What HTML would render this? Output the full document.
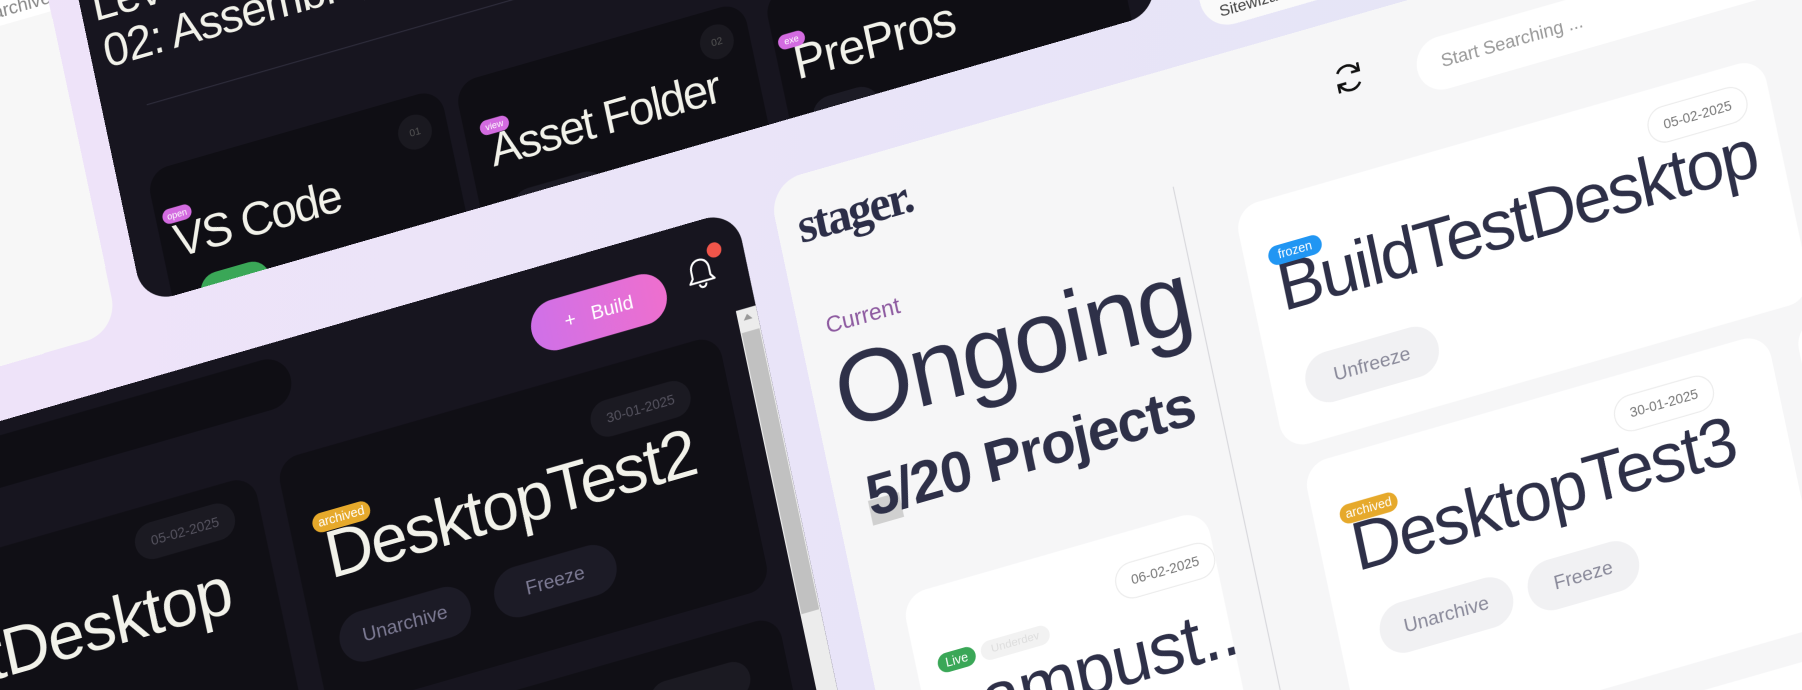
<!DOCTYPE html>
<html><head><meta charset="utf-8"><style>
*{margin:0;padding:0;box-sizing:border-box}
html,body{width:1802px;height:690px;overflow:hidden}
body{background:linear-gradient(100deg,#efe3f9 0%,#e9e4f8 45%,#e3e6f5 100%);font-family:"Liberation Sans",sans-serif}
#clip{position:relative;width:1802px;height:690px;overflow:hidden}
#s{position:absolute;left:0;top:0;width:1568px;height:600px;transform-origin:0 0;transform:scale(1.14923)}
.t{position:absolute;transform-origin:0 0;transform:matrix(0.961,-0.276,0.208,0.978,0,0);overflow:hidden}
.a{position:absolute;white-space:nowrap;line-height:1}
.dk{background:#17151f}
.dc{position:absolute;background:#0f0e14;border-radius:20px;overflow:hidden}
.lc{position:absolute;background:#fff;border-radius:22px;overflow:hidden}
.pill{position:absolute;border-radius:9px;color:#fff;font-size:10px;display:flex;align-items:center;justify-content:center}
.btn{position:absolute;border-radius:22px;display:flex;align-items:center;justify-content:center;font-size:17px}
.dd{position:absolute;border-radius:16px;font-size:12px;display:flex;align-items:center;justify-content:center}
</style></head><body><div id="clip"><div id="s">

<!-- left grey panel -->
<div class="t" style="left:-385px;top:-90px;width:400px;height:500px;background:#f7f7f7;border-radius:30px">
  <div style="position:absolute;left:0;top:0;width:400px;height:215px;background:#fff"></div>
  <div class="a" style="left:330px;top:196px;font-size:16px;color:#888">Unarchive</div>
</div>

<!-- Sitewiz panel -->
<div class="t" style="left:1008px;top:-168px;width:600px;height:200px;background:#fafafa;border-radius:26px">
  <div class="a" style="left:15px;top:179px;font-size:14px;color:#444">Sitewizard</div>
</div>

<!-- dark panel 1 -->
<div class="t dk" style="left:0;top:-322px;width:920px;height:600px;border-radius:28px">
  <div class="a" style="left:10px;top:318px;font-size:40px;color:#f2f2ea;letter-spacing:-1px">Level 02</div>
  <div class="a" style="left:12px;top:360px;font-size:40px;color:#f2f2ea;letter-spacing:-1px">02: Assemble, Test &amp; Deploy</div>
  <div style="position:absolute;left:39px;top:433px;width:870px;height:1px;background:#2e2c3b"></div>
  <div class="dc" style="left:26px;top:490px;width:266px;height:250px">
    <div class="dd" style="left:222px;top:16px;width:30px;height:30px;border-radius:50%;background:#1a1920;color:#555;font-size:9px">01</div>
    <div class="a" style="left:12px;top:46px;font-size:40px;color:#f2f2ea;letter-spacing:-1.5px">VS Code</div>
    <div class="pill" style="left:6px;top:36px;width:26px;height:13px;background:#d36be0;font-size:8px">open</div>
    <div class="btn" style="left:25px;top:100px;width:62px;height:32px;background:#3aa757;color:#fff;font-size:12px">Start</div>
  </div>
  <div class="dc" style="left:305px;top:490px;width:261px;height:250px">
    <div class="dd" style="left:217px;top:13px;width:30px;height:30px;border-radius:50%;background:#1a1920;color:#555;font-size:9px">02</div>
    <div class="a" style="left:19px;top:46px;font-size:40px;color:#f2f2ea;letter-spacing:-1.5px">Asset Folder</div>
    <div class="pill" style="left:14px;top:38px;width:26px;height:13px;background:#d36be0;font-size:8px">view</div>
    <div class="btn" style="left:27px;top:105px;width:84px;height:34px;background:#1c1b25;color:#666;font-size:12px">Explorer</div>
  </div>
  <div class="dc" style="left:585px;top:490px;width:310px;height:250px">
    <div class="a" style="left:14px;top:44px;font-size:42px;color:#f2f2ea;letter-spacing:-1px">PrePros</div>
    <div class="pill" style="left:4px;top:38px;width:24px;height:13px;background:#d36be0;font-size:8px">exe</div>
    <div class="btn" style="left:20px;top:100px;width:60px;height:34px;background:#1c1b25;color:#666;font-size:12px">Run</div>
  </div>
</div>

<!-- dark panel 2 -->
<div class="t dk" style="left:-225px;top:431px;width:900px;height:600px;border-radius:28px">
  <div style="position:absolute;left:150px;top:12px;width:340px;height:44px;border-radius:22px;background:#0f0e14"></div>
  <div class="btn" style="left:704px;top:31px;width:122px;height:44px;background:linear-gradient(90deg,#cf70e8,#ee6fce);color:#fff">+&nbsp;&nbsp;&nbsp;Build</div>
  <svg style="position:absolute;left:845px;top:30px" width="28" height="30" viewBox="0 0 28 30"><path d="M14 3c-5 0-8 4-8 9v6l-3 4h22l-3-4v-6c0-5-3-9-8-9z" fill="none" stroke="#fff" stroke-width="1.8" stroke-linejoin="round"/><path d="M11 24a3 3 0 0 0 6 0" fill="none" stroke="#fff" stroke-width="1.8"/></svg>
  <div style="position:absolute;left:868px;top:22px;width:13px;height:13px;border-radius:50%;background:#f0554a"></div>
  <div style="position:absolute;left:882px;top:85px;width:18px;height:515px;background:#ececec"></div>
  <div style="position:absolute;left:883px;top:105px;width:16px;height:250px;background:#c1c1c1"></div>
  <div style="position:absolute;left:887px;top:90px;width:0;height:0;border-left:4px solid transparent;border-right:4px solid transparent;border-bottom:5px solid #999"></div>
  <div class="dc" style="left:-20px;top:106px;width:460px;height:225px;background:#100f15">
    <div class="dd" style="left:347px;top:15px;width:90px;height:32px;background:#1b1a22;color:#55535f">05-02-2025</div>
    <div class="a" style="left:-190px;width:610px;text-align:right;top:62px;font-size:58px;color:#f2f2ea;letter-spacing:-1px">BuildTestDesktop</div>
  </div>
  <div class="dc" style="left:462px;top:100px;width:400px;height:225px;background:#100f15">
    <div class="dd" style="left:276px;top:28px;width:90px;height:32px;background:#1b1a22;color:#55535f">30-01-2025</div>
    <div class="a" style="left:26px;top:64px;font-size:58px;color:#f2f2ea;letter-spacing:-1.5px">DesktopTest2</div>
    <div class="pill" style="left:20px;top:54px;width:52px;height:17px;background:#e6a92b;font-size:11px">archived</div>
    <div class="btn" style="left:22px;top:146px;width:118px;height:44px;background:#1c1b26;color:#7c7a93">Unarchive</div>
    <div class="btn" style="left:162px;top:146px;width:110px;height:44px;background:#1c1b26;color:#7c7a93">Freeze</div>
  </div>
  <div class="dc" style="left:-20px;top:350px;width:460px;height:225px;background:#100f15"></div>
  <div class="dc" style="left:462px;top:350px;width:400px;height:225px;background:#100f15">
    <div class="dd" style="left:276px;top:28px;width:90px;height:32px;background:#1b1a22"></div>
  </div>
</div>

<!-- light panel -->
<div class="t" style="left:668px;top:160px;width:1200px;height:800px;background:#f6f6f7;border-radius:30px">
  <div class="a" style="left:18px;top:24px;font-size:42px;font-weight:bold;letter-spacing:-2px;color:#2c2e48;font-family:'Liberation Serif',serif">stager.</div>
  <div class="a" style="left:24px;top:124px;font-size:20px;color:#8d5aa0">Current</div>
  <div class="a" style="left:20px;top:150px;font-size:88px;font-weight:300;color:#2e3048;letter-spacing:-2px">Ongoing</div>
  <div style="position:absolute;left:28px;top:290px;width:28px;height:22px;background:#d0d0d0"></div>
  <div class="a" style="left:28px;top:262px;font-size:50px;font-weight:bold;color:#2e3048;letter-spacing:-1px">5/20 Projects</div>
  <div class="lc" style="left:39px;top:378px;width:275px;height:300px">
    <div class="dd" style="left:185px;top:26px;width:90px;height:32px;border:1px solid #ececec;color:#777">06-02-2025</div>
    <div class="pill" style="left:19px;top:58px;width:34px;height:17px;background:#3aa757;font-size:11px">Live</div>
    <div class="pill" style="left:58px;top:58px;width:62px;height:17px;background:#f2f2f2;color:#ddd;font-size:10px">Underdev</div>
    <div class="a" style="left:20px;top:78px;font-size:62px;color:#2e3048;letter-spacing:-1px">campust...</div>
  </div>
  <div style="position:absolute;left:345px;top:100px;width:1px;height:700px;background:#d8d8dc"></div>
  <svg style="position:absolute;left:500px;top:36px" width="30" height="30" viewBox="0 0 30 30"><path d="M24 11A10 10 0 0 0 6 9" fill="none" stroke="#111" stroke-width="2.2"/><path d="M25 4v7h-7" fill="none" stroke="#111" stroke-width="2.2"/><path d="M6 19a10 10 0 0 0 18 2" fill="none" stroke="#111" stroke-width="2.2"/><path d="M5 26v-7h7" fill="none" stroke="#111" stroke-width="2.2"/></svg>
  <div style="position:absolute;left:575px;top:38px;width:520px;height:46px;border-radius:23px;background:#fff"></div>
  <div class="a" style="left:597px;top:53px;font-size:16px;color:#999">Start Searching ...</div>
  <div class="lc" style="left:393px;top:133px;width:478px;height:215px">
    <div class="dd" style="left:368px;top:17px;width:90px;height:32px;border:1px solid #ececec;color:#777">05-02-2025</div>
    <div class="a" style="left:24px;top:48px;font-size:60px;color:#2e3048;letter-spacing:-2px">BuildTestDesktop</div>
    <div class="pill" style="left:21px;top:41px;width:48px;height:17px;background:#2196f3;font-size:11px">frozen</div>
    <div class="btn" style="left:30px;top:142px;width:120px;height:44px;background:#f1f1f3;color:#8a8a9a">Unfreeze</div>
  </div>
  <div class="lc" style="left:405px;top:365px;width:420px;height:260px">
    <div class="dd" style="left:275px;top:19px;width:90px;height:32px;border:1px solid #ececec;color:#777">30-01-2025</div>
    <div class="a" style="left:28px;top:52px;font-size:60px;color:#2e3048;letter-spacing:-1.5px">DesktopTest3</div>
    <div class="pill" style="left:23px;top:43px;width:52px;height:17px;background:#e6a92b;font-size:11px">archived</div>
    <div class="btn" style="left:36px;top:138px;width:120px;height:44px;background:#f1f1f3;color:#8a8a9a">Unarchive</div>
    <div class="btn" style="left:170px;top:138px;width:100px;height:44px;background:#f1f1f3;color:#8a8a9a">Freeze</div>
  </div>
  <div class="lc" style="left:850px;top:365px;width:420px;height:260px">
    <div class="pill" style="left:15px;top:41px;width:52px;height:17px;background:#e6a92b;font-size:11px">archived</div>
  </div>
  <div class="lc" style="left:405px;top:650px;width:420px;height:260px">
    <div class="dd" style="left:275px;top:19px;width:90px;height:32px;border:1px solid #ececec;color:#777">05-02-2025</div>
  </div>
  <div class="lc" style="left:850px;top:650px;width:420px;height:260px">
    <div class="pill" style="left:15px;top:41px;width:52px;height:17px;background:#e6a92b;font-size:11px">archived</div>
  </div>
</div>

</div></div></body></html>
